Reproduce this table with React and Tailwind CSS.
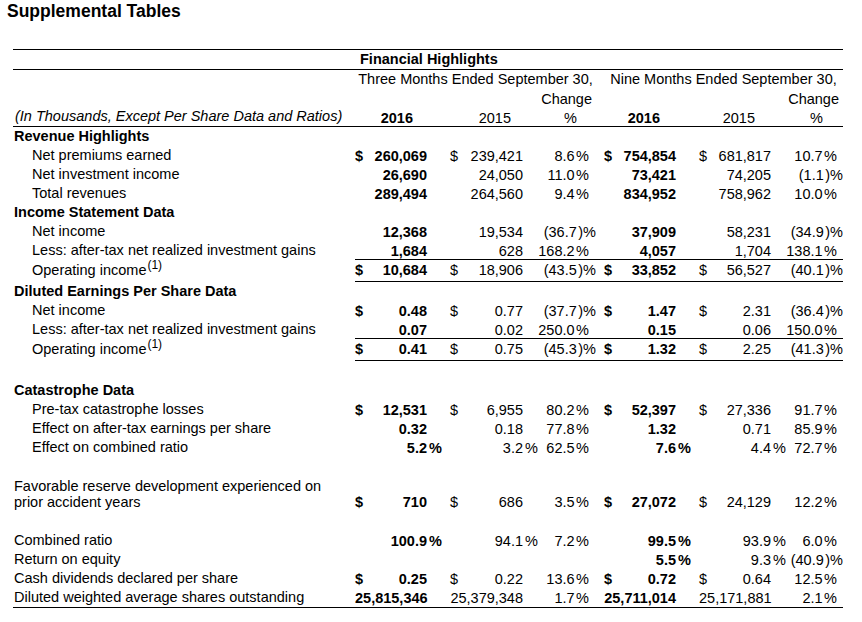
import React from "react";

const m = (n) => ({ s: true, n });
const n = (n) => ({ n });
const r = (r) => ({ r });

const rows = [
  { h: "Revenue Highlights" },
  { l: "Net premiums earned", i: 1, v: [m("260,069"), m("239,421"), "8.6", m("754,854"), m("681,817"), "10.7"] },
  { l: "Net investment income", i: 1, v: [n("26,690"), n("24,050"), "11.0", n("73,421"), n("74,205"), "-1.1"] },
  { l: "Total revenues", i: 1, v: [n("289,494"), n("264,560"), "9.4", n("834,952"), n("758,962"), "10.0"] },
  { h: "Income Statement Data" },
  { l: "Net income", i: 1, v: [n("12,368"), n("19,534"), "-36.7", n("37,909"), n("58,231"), "-34.9"] },
  { l: "Less: after-tax net realized investment gains", i: 1, u: 1, v: [n("1,684"), n("628"), "168.2", n("4,057"), n("1,704"), "138.1"] },
  { l: "Operating income", sup: 1, i: 1, u: 1, ht: "h-[22px]", v: [m("10,684"), m("18,906"), "-43.5", m("33,852"), m("56,527"), "-40.1"] },
  { h: "Diluted Earnings Per Share Data" },
  { l: "Net income", i: 1, v: [m("0.48"), m("0.77"), "-37.7", m("1.47"), m("2.31"), "-36.4"] },
  { l: "Less: after-tax net realized investment gains", i: 1, u: 1, v: [n("0.07"), n("0.02"), "250.0", n("0.15"), n("0.06"), "150.0"] },
  { l: "Operating income", sup: 1, i: 1, u: 1, ht: "h-[22px]", v: [m("0.41"), m("0.75"), "-45.3", m("1.32"), m("2.25"), "-41.3"] },
  { blank: "h-[20px]" },
  { h: "Catastrophe Data" },
  { l: "Pre-tax catastrophe losses", i: 1, v: [m("12,531"), m("6,955"), "80.2", m("52,397"), m("27,336"), "91.7"] },
  { l: "Effect on after-tax earnings per share", i: 1, v: [n("0.32"), n("0.18"), "77.8", n("1.32"), n("0.71"), "85.9"] },
  { l: "Effect on combined ratio", i: 1, v: [r("5.2"), r("3.2"), "62.5", r("7.6"), r("4.4"), "72.7"] },
  { blank: "h-[19px]" },
  { l: "Favorable reserve development experienced on prior accident years", two: 1, v: [m("710"), m("686"), "3.5", m("27,072"), m("24,129"), "12.2"] },
  { blank: "h-[19px]" },
  { l: "Combined ratio", v: [r("100.9"), r("94.1"), "7.2", r("99.5"), r("93.9"), "6.0"] },
  { l: "Return on equity", v: [null, null, "", r("5.5"), r("9.3"), "-40.9"] },
  { l: "Cash dividends declared per share", v: [m("0.25"), m("0.22"), "13.6", m("0.72"), m("0.64"), "12.5"] },
  { l: "Diluted weighted average shares outstanding", last: 1, v: [n("25,815,346"), n("25,379,348"), "1.7", n("25,711,014"), n("25,171,881"), "2.1"] },
];

const cols = "grid grid-cols-[72px_20px_76px_73px_80px_19px_76px_72px]";

function Val({ v, bold, pl }) {
  if (!v) return <div />;
  if (v.r)
    return (
      <div className={`flex justify-end whitespace-nowrap ${bold ? "font-bold" : ""}`}>
        <span>{v.r}</span>
        <span className="inline-block w-0">
          <span className="pl-[2px]">%</span>
        </span>
      </div>
    );
  return (
    <div className={`flex justify-between whitespace-nowrap ${pl} ${bold ? "font-bold" : ""}`}>
      {v.s ? <span>$</span> : <span />}
      <span>{v.n}</span>
    </div>
  );
}

function Chg({ v, pr }) {
  if (!v) return <div />;
  const neg = v[0] === "-";
  return (
    <div className={`text-right whitespace-nowrap ${neg ? "" : pr}`}>
      {neg ? `(${v.slice(1)}` : v}
      <span className="ml-[1.5px]">{neg ? ")%" : "%"}</span>
    </div>
  );
}

function Row({ row }) {
  if (row.blank) return <div className={row.blank} />;
  if (row.h)
    return (
      <div className="flex h-[19px] items-center pl-[1px] font-bold">{row.h}</div>
    );

  const [a, b, c, d, e, f] = row.v;
  const h = row.two ? "h-[36px]" : row.last ? "h-[20px] border-b border-black" : row.ht || "h-[19px]";
  const align = row.two ? "items-end pb-[2px]" : "items-center";

  return (
    <div className={`flex ${h}`}>
      <div className={`flex w-[342px] ${align} ${row.i ? "pl-[19px]" : "pl-[1px]"}`}>
        <span className={row.two ? "block w-[320px] leading-[16px]" : ""}>
          {row.l}
          {row.sup ? <sup className="text-[12px] ml-[1px]">(1)</sup> : null}
        </span>
      </div>
      <div className={`${cols} w-[488px] ${align} ${row.u ? "border-b border-black" : ""} ${row.two ? "leading-[16px]" : ""}`}>
        <Val v={a} bold pl="pl-0" />
        <div />
        <Val v={b} pl="pl-[3px]" />
        <Chg v={c} pr="pr-[7px]" />
        <Val v={d} bold pl="pl-[8px]" />
        <div />
        <Val v={e} pl="pl-[4px]" />
        <Chg v={f} pr="pr-[6px]" />
      </div>
    </div>
  );
}

export default function App() {
  return (
    <div className="w-[862px] h-[622px] bg-white text-black font-['Liberation_Sans',Arial,sans-serif] overflow-hidden">
      <div className="h-[49px] pl-[7px] text-[17.5px] font-bold leading-[22px]">Supplemental Tables</div>
      <div className="ml-[13px] w-[830px] text-[14.5px]">
        <div className="flex h-[21px] border-y border-black">
          <div className="w-[342px]" />
          <div className="flex items-center pl-[5px] font-bold">Financial Highlights</div>
        </div>
        <div className="flex h-[19px]">
          <div className="w-[342px]" />
          <div className="flex w-[241px] items-center justify-center whitespace-nowrap">Three Months Ended September 30,</div>
          <div className="flex w-[247px] items-center justify-center whitespace-nowrap pl-[8px]">Nine Months Ended September 30,</div>
        </div>
        <div className="flex h-[19px]">
          <div className="w-[342px]" />
          <div className={`${cols} w-[488px] items-center`}>
            <div />
            <div />
            <div />
            <div className="text-right pr-[4px]">Change</div>
            <div />
            <div />
            <div />
            <div className="text-right pr-[4px]">Change</div>
          </div>
        </div>
        <div className="flex h-[19px] border-b border-black">
          <div className="flex w-[342px] items-center pl-[2px] italic">(In Thousands, Except Per Share Data and Ratios)</div>
          <div className={`${cols} w-[488px] items-center`}>
            <div className="text-right pr-[14px] font-bold">2016</div>
            <div />
            <div className="text-right pr-[12px]">2015</div>
            <div className="text-right pr-[19px]">%</div>
            <div className="text-right pr-[16px] font-bold">2016</div>
            <div />
            <div className="text-right pr-[16px]">2015</div>
            <div className="text-right pr-[20px]">%</div>
          </div>
        </div>
        {rows.map((row, idx) => (
          <Row key={idx} row={row} />
        ))}
      </div>
    </div>
  );
}
